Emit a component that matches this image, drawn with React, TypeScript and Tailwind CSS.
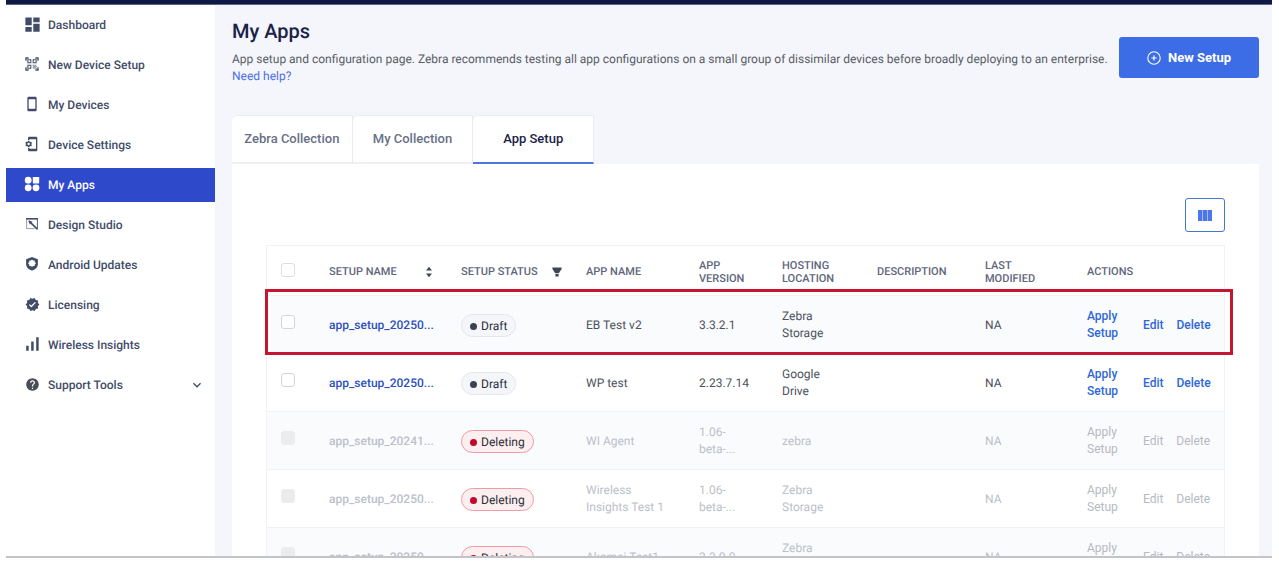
import type { ReactNode } from "react";
import {
  MdDashboard,
  MdExpandMore,
  MdHelp,
  MdPhonelinkSetup,
  MdQrCodeScanner,
  MdSignalCellularAlt,
  MdOutlineStayCurrentPortrait,
  MdVerified,
} from "react-icons/md";

function AppsIcon() {
  return (
    <svg viewBox="0 0 16 16" className="size-4" fill="currentColor" aria-hidden="true">
      <circle cx="4.2" cy="4.2" r="3.4" />
      <rect x="8.8" y="1" width="6.4" height="6.4" rx="0.6" />
      <circle cx="4.2" cy="11.8" r="3.4" />
      <circle cx="12" cy="11.8" r="3.4" />
    </svg>
  );
}

function StudioIcon() {
  return (
    <svg viewBox="0 0 16 16" className="size-4" fill="none" stroke="currentColor" aria-hidden="true">
      <path d="M10.6 12.6H2.6V3.4" strokeWidth="0.9" opacity="0.6" />
      <path d="M2 2.8H14" strokeWidth="1.6" />
      <path d="M13.4 3V12" strokeWidth="0.9" />
      <path d="M5 5.2L13.6 13.4" strokeWidth="1.6" />
      <path d="M4.4 4.6L8.6 5.8L5.8 8.4Z" fill="currentColor" stroke="none" />
    </svg>
  );
}

function ShieldIcon() {
  return (
    <svg viewBox="0 0 16 16" className="size-4" fill="currentColor" fillRule="evenodd" aria-hidden="true">
      <path d="M8 1L13.9 3.2V8C13.9 11.3 11.4 13.6 8 14.6C4.6 13.6 2.1 11.3 2.1 8V3.2ZM8 3.6L7 4.6L5.4 4.5L5.2 6.1L4 7.3L5.2 8.5L5.4 10.1L7 10L8 11L9 10L10.6 10.1L10.8 8.5L12 7.3L10.8 6.1L10.6 4.5L9 4.6Z" />
    </svg>
  );
}

function SortIcon() {
  return (
    <svg viewBox="0 0 8 12" className="h-3 w-2" fill="currentColor" aria-hidden="true">
      <path d="M4 0.8L7 4.4H1ZM4 11.2L1 7.6H7Z" />
    </svg>
  );
}

function FilterIcon() {
  return (
    <svg viewBox="0 0 10 10" className="size-[10px]" fill="currentColor" aria-hidden="true">
      <path d="M0.4 0.6H9.6V2L7 6H3L0.4 2ZM3.4 6.8H6.6V9.4H3.4Z" />
    </svg>
  );
}

function PlusIcon() {
  return (
    <svg viewBox="0 0 14 14" className="size-[14px]" fill="none" stroke="currentColor" aria-hidden="true">
      <circle cx="7" cy="7" r="6.2" strokeWidth="1.1" />
      <path d="M7 4.4V9.6M4.4 7H9.6" strokeWidth="1.2" />
    </svg>
  );
}

function ColumnsIcon() {
  return (
    <svg viewBox="0 0 14 11" className="h-[11px] w-[14px]" fill="currentColor" aria-hidden="true">
      <path d="M0 0H4.4V11H0ZM4.9 0H9.1V11H4.9ZM9.6 0H14V11H9.6Z" />
    </svg>
  );
}

const navItems: { label: string; icon: ReactNode; active?: boolean; expandable?: boolean }[] = [
  { label: "Dashboard", icon: <MdDashboard className="size-[19px]" /> },
  { label: "New Device Setup", icon: <MdQrCodeScanner className="size-4" /> },
  { label: "My Devices", icon: <MdOutlineStayCurrentPortrait className="size-4" /> },
  { label: "Device Settings", icon: <MdPhonelinkSetup className="size-4" /> },
  { label: "My Apps", icon: <AppsIcon />, active: true },
  { label: "Design Studio", icon: <StudioIcon /> },
  { label: "Android Updates", icon: <ShieldIcon /> },
  { label: "Licensing", icon: <MdVerified className="size-[15px]" /> },
  { label: "Wireless Insights", icon: <MdSignalCellularAlt className="size-5" /> },
  { label: "Support Tools", icon: <MdHelp className="size-[15px] text-[#4a4d55]" />, expandable: true },
];

function Sidebar() {
  return (
    <nav className="w-[209px] shrink-0 bg-white pt-[3px] shadow-[1px_0_3px_rgba(40,60,120,0.12)]">
      <ul className="flex flex-col gap-[6px]">
        {navItems.map((item) => (
          <li key={item.label}>
            <a
              href="#"
              className={`flex h-[34px] items-center gap-[6px] pr-[10px] pl-4 text-xs font-medium ${
                item.active ? "bg-[#2f49cb] text-white" : "text-[#414c69]"
              }`}
            >
              <span className="flex w-5 justify-center pb-[2px]">{item.icon}</span>
              <span className="flex-1">{item.label}</span>
              {item.expandable && <MdExpandMore className="size-4" />}
            </a>
          </li>
        ))}
      </ul>
    </nav>
  );
}

type Row = {
  name: string;
  status: "Draft" | "Deleting";
  app: string;
  version: string;
  host: string;
};

const rows: Row[] = [
  { name: "app_setup_20250...", status: "Draft", app: "EB Test v2", version: "3.3.2.1", host: "Zebra Storage" },
  { name: "app_setup_20250...", status: "Draft", app: "WP test", version: "2.23.7.14", host: "Google Drive" },
  { name: "app_setup_20241...", status: "Deleting", app: "WI Agent", version: "1.06-beta-...", host: "zebra" },
  { name: "app_setup_20250...", status: "Deleting", app: "Wireless Insights Test 1", version: "1.06-beta-...", host: "Zebra Storage" },
  { name: "app_setup_20250...", status: "Deleting", app: "Akamai Test1", version: "3.3.0.0", host: "Zebra Storage" },
];

function StatusBadge({ status }: { status: Row["status"] }) {
  const draft = status === "Draft";
  return (
    <span
      className={`inline-flex h-[23px] items-center gap-1 rounded-full border px-2 pt-px text-xs text-[#2b2f3a] ${
        draft ? "border-[#e3e6ee] bg-[#f4f6fa]" : "border-[#ee9aa8] bg-[#fdeeef]"
      }`}
    >
      <span className={`size-[7px] rounded-full ${draft ? "bg-[#3b4250]" : "bg-[#c3062b]"}`} />
      {status}
    </span>
  );
}

function SetupRow({ row, striped }: { row: Row; striped: boolean }) {
  const off = row.status === "Deleting";
  const action = off ? "text-[#b6b9c1] text-left" : "text-[#2e68d8] font-medium text-left";
  return (
    <tr
      className={`h-[58px] border-t border-[#f0f2f6] ${striped ? "bg-[#fafbfd]" : "bg-white"} ${
        off ? "text-[#bcc0ca]" : "text-[#4d515c]"
      }`}
    >
      <td className="pb-[5px] pl-[14px]">
        <input
          type="checkbox"
          aria-label={`Select ${row.name}`}
          disabled={off}
          className="block size-[14px] appearance-none rounded-[3px] border border-[#d3d6dd] bg-white disabled:border-[#ececee] disabled:bg-[#ececee]"
        />
      </td>
      <td className="pt-[2px] pl-3">
        <a href="#" className={off ? "font-medium" : "font-medium text-[#2b4fc0]"}>
          {row.name}
        </a>
      </td>
      <td className="pt-[3px] pl-3">
        <div className="flex">
          <StatusBadge status={row.status} />
        </div>
      </td>
      <td className="pt-[2px] pr-4 pl-3">{row.app}</td>
      <td className="pt-[2px] pr-3 pl-3">{row.version}</td>
      <td className="pt-[2px] pr-6 pl-3">{row.host}</td>
      <td />
      <td className="pt-[2px] pl-3">NA</td>
      <td className="pt-[2px] pr-3 pl-3">
        <div className="flex items-center gap-[13px]">
          <button type="button" disabled={off} className={`w-[43px] ${action}`}>
            Apply Setup
          </button>
          <button type="button" disabled={off} className={action}>
            Edit
          </button>
          <button type="button" disabled={off} className={action}>
            Delete
          </button>
        </div>
      </td>
    </tr>
  );
}

function SetupTable() {
  return (
    <div className="relative border border-b-0 border-[#f0f2f6]">
      <table className="w-full table-fixed border-collapse text-left text-xs leading-[17px]">
        <colgroup>
          <col className="w-[50px]" />
          <col className="w-[132px]" />
          <col className="w-[125px]" />
          <col className="w-[113px]" />
          <col className="w-[83px]" />
          <col className="w-[95px]" />
          <col className="w-[108px]" />
          <col className="w-[102px]" />
          <col />
        </colgroup>
        <thead>
          <tr className="h-[49px] text-[11px] leading-[13px] text-[#5f667c] uppercase [&_th]:pt-[3px] [&_th]:font-medium">
            <th className="pb-1 pl-[14px]">
              <input
                type="checkbox"
                aria-label="Select all"
                className="block size-[14px] appearance-none rounded-[3px] border border-[#dcdfe5] bg-white"
              />
            </th>
            <th className="pr-4 pl-3">
              <div className="flex items-center justify-between text-nowrap">
                Setup Name
                <button type="button" aria-label="Sort by setup name" className="text-[#3f4656]">
                  <SortIcon />
                </button>
              </div>
            </th>
            <th className="pr-3 pl-3">
              <div className="flex items-center justify-between text-nowrap">
                Setup Status
                <button type="button" aria-label="Filter by setup status" className="text-[#3f4656]">
                  <FilterIcon />
                </button>
              </div>
            </th>
            <th className="pl-3">App Name</th>
            <th className="pr-3 pl-3">App Version</th>
            <th className="pr-6 pl-3">Hosting Location</th>
            <th className="pl-3">Description</th>
            <th className="pr-6 pl-3">Last Modified</th>
            <th className="pl-3">Actions</th>
          </tr>
        </thead>
        <tbody>
          {rows.map((row, i) => (
            <SetupRow key={i} row={row} striped={i % 2 === 0} />
          ))}
        </tbody>
      </table>
      <div className="pointer-events-none absolute top-[43px] -right-[9px] -left-[2px] h-[66px] border-3 border-[#c8152f]" />
    </div>
  );
}

const tabs = ["Zebra Collection", "My Collection", "App Setup"];

export default function App() {
  return (
    <div className="h-screen overflow-hidden bg-white pr-[7px] pb-[9px] pl-[6px] font-[Roboto,sans-serif] [text-rendering:geometricPrecision]">
      <div className="flex h-full flex-col overflow-hidden border-b-2 border-[#c3c4c8]">
        <header className="h-[5px] shrink-0 border-b border-[#5b6585] bg-[#0e1a44]" />
        <div className="flex min-h-0 flex-1">
          <Sidebar />
          <main className="min-w-0 flex-1 overflow-hidden bg-[#f4f6fb] pt-[13px] pr-[13px] pl-[17px]">
            <div className="flex items-start justify-between gap-2">
              <div>
                <h1 className="text-xl leading-[26px] font-medium text-[#1a2348]">My Apps</h1>
                <p className="mt-[7px] text-xs leading-[17px] text-[#5a5d66]">
                  App setup and configuration page. Zebra recommends testing all app configurations on a small group of
                  dissimilar devices before broadly deploying to an enterprise.
                </p>
                <a href="#" className="block text-xs leading-[17px] text-[#4c6fe6]">
                  Need help?
                </a>
              </div>
              <button
                type="button"
                className="mt-[19px] flex h-[41px] w-[140px] shrink-0 items-center justify-center gap-[7px] rounded-[3px] bg-[#3c6de6] text-[13px] font-bold text-white"
              >
                <PlusIcon />
                New Setup
              </button>
            </div>
            <div role="tablist" className="mt-[30px] flex w-[362px]">
              {tabs.map((tab) => {
                const active = tab === "App Setup";
                return (
                  <button
                    key={tab}
                    type="button"
                    role="tab"
                    aria-selected={active}
                    className={`h-[49px] flex-1 basis-0 rounded-tl-[6px] border-t border-r border-b-2 border-[#e9ebf1] bg-white text-[13px] font-medium ${
                      active ? "border-b-[#4d76e4] text-[#1a2348]" : "border-b-[#eef0f5] text-[#687087]"
                    }`}
                  >
                    {tab}
                  </button>
                );
              })}
            </div>
            <section className="bg-white pt-[34px] pr-[34px] pl-[34px]">
              <div className="mb-[13px] flex justify-end">
                <button
                  type="button"
                  aria-label="Choose columns"
                  className="flex h-[34px] w-10 items-center justify-center rounded-[3px] border border-[#4377d0] bg-white text-[#4d76e8]"
                >
                  <ColumnsIcon />
                </button>
              </div>
              <SetupTable />
            </section>
          </main>
        </div>
      </div>
    </div>
  );
}
